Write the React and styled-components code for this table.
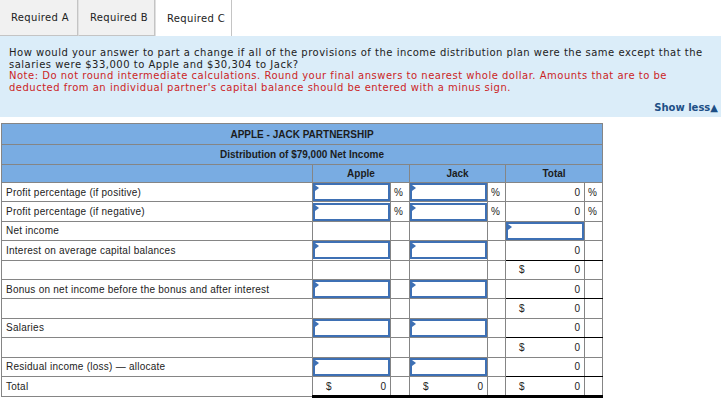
import React from "react";
import styled, { createGlobalStyle } from "styled-components";

const GlobalStyle = createGlobalStyle`
  html, body {
    margin: 0;
    padding: 0;
    background: #ffffff;
  }
  body {
    font-family: "DejaVu Sans", Verdana, sans-serif;
    color: #222222;
  }
`;

const Page = styled.div`
  width: 721px;
  height: 402px;
  overflow: hidden;
`;

const TabBar = styled.div`
  display: flex;
  height: 36px;
`;

const TabButton = styled.div`
  width: ${(p) => p.$w}px;
  box-sizing: border-box;
  display: flex;
  align-items: center;
  padding-left: 11px;
  font-size: 10px;
  letter-spacing: 0.35px;
  color: #222;
  background: ${(p) => (p.$active ? "#ffffff" : "#f1f1f1")};
  border-right: 1px solid #c4c4c4;
  border-left: ${(p) => (p.$first ? "none" : "1px solid #e0e0e0")};
  border-bottom: ${(p) => (p.$active ? "none" : "1px solid #c4c4c4")};
`;

const Filler = styled.div`
  flex: 1;
`;

const Panel = styled.div`
  background: #dbedf9;
  padding: 11px 3px 4px 9px;
  height: 66px;
  display: flex;
  flex-direction: column;
`;

const Question = styled.p`
  margin: 0;
  font-size: 10px;
  letter-spacing: 0.5px;
  line-height: 11.6px;
  color: #222;
`;

const Note = styled(Question)`
  color: #cc1f26;
`;

const ShowLess = styled.div`
  margin-top: auto;
  align-self: flex-end;
  font-size: 10px;
  font-weight: bold;
  color: #1d4f86;
`;

const TableWrap = styled.div`
  padding: 6px 0 0 1px;
`;

const Sheet = styled.table`
  border-collapse: collapse;
  table-layout: fixed;
  width: 601px;
  font-family: "Liberation Sans", Arial, sans-serif;
  font-size: 10px;
  color: #222;
`;

const HeadCell = styled.td`
  background: #79ace2;
  border: 1px solid #858585;
  height: ${(p) => p.$h}px;
  padding: 0;
  text-align: center;
  font-weight: bold;
  font-size: 10px;
  color: #1c1c1c;
`;

const Cell = styled.td`
  border: 1px solid #858585;
  border-bottom: ${(p) =>
    p.$under === "thick"
      ? "3px solid #000"
      : p.$under
      ? "1px solid #000"
      : "1px solid #858585"};
  height: 18.4px;
  padding: ${(p) => (p.$label ? "0 0 0 4px" : "0 4px")};
  text-align: ${(p) => (p.$label ? "left" : "right")};
  letter-spacing: ${(p) => (p.$label ? "0.25px" : "0")};
  white-space: nowrap;
  vertical-align: middle;
`;

const InputCell = styled.td`
  border: 1px solid #858585;
  padding: 0;
  height: 18.4px;
`;

const Field = styled.div`
  position: relative;
  box-sizing: border-box;
  height: 18px;
  border: 2px solid #3e70b4;
  background: #fff;
  &::before {
    content: "";
    position: absolute;
    left: 0;
    top: 0;
    border-top: 3px solid transparent;
    border-bottom: 3px solid transparent;
    border-left: 4px solid #3e70b4;
  }
`;

const Money = styled.div`
  display: flex;
  justify-content: space-between;
  padding-left: 9px;
`;

const Pct = styled.span`
  display: block;
  text-align: left;
  margin-left: -1px;
`;

const tabs = [
  { label: "Required A", w: 78 },
  { label: "Required B", w: 77 },
  { label: "Required C", w: 77, active: true },
];

const Input = () => (
  <InputCell>
    <Field />
  </InputCell>
);

const Amount = ({ dollar, value }) =>
  dollar ? (
    <Money>
      <span>$</span>
      <span>{value}</span>
    </Money>
  ) : (
    value
  );

const PctRow = ({ label }) => (
  <tr>
    <Cell $label>{label}</Cell>
    <Input />
    <Cell>
      <Pct>%</Pct>
    </Cell>
    <Input />
    <Cell>
      <Pct>%</Pct>
    </Cell>
    <Cell>0</Cell>
    <Cell>
      <Pct>%</Pct>
    </Cell>
  </tr>
);

const EntryRow = ({ label }) => (
  <tr>
    <Cell $label>{label}</Cell>
    <Input />
    <Cell />
    <Input />
    <Cell />
    <Cell $under>0</Cell>
    <Cell $under />
  </tr>
);

const SubtotalRow = () => (
  <tr>
    <Cell $label />
    <Cell />
    <Cell />
    <Cell />
    <Cell />
    <Cell>
      <Amount dollar value="0" />
    </Cell>
    <Cell />
  </tr>
);

export default function App() {
  return (
    <Page>
      <GlobalStyle />
      <TabBar>
        {tabs.map((t, i) => (
          <TabButton key={t.label} $w={t.w} $active={t.active} $first={i === 0}>
            {t.label}
          </TabButton>
        ))}
        <Filler />
      </TabBar>
      <Panel>
        <Question>
          How would your answer to part a change if all of the provisions of the
          income distribution plan were the same except that the salaries were
          $33,000 to Apple and $30,304 to Jack?
        </Question>
        <Note>
          Note: Do not round intermediate calculations. Round your final answers
          to nearest whole dollar. Amounts that are to be deducted from an
          individual partner's capital balance should be entered with a minus
          sign.
        </Note>
        <ShowLess>Show less▲</ShowLess>
      </Panel>
      <TableWrap>
        <Sheet>
          <colgroup>
            <col style={{ width: 311 }} />
            <col style={{ width: 78 }} />
            <col style={{ width: 19 }} />
            <col style={{ width: 78 }} />
            <col style={{ width: 18 }} />
            <col style={{ width: 79 }} />
            <col style={{ width: 18 }} />
          </colgroup>
          <tbody>
            <tr>
              <HeadCell colSpan={7} $h={20}>
                APPLE - JACK PARTNERSHIP
              </HeadCell>
            </tr>
            <tr>
              <HeadCell colSpan={7} $h={19}>
                Distribution of $79,000 Net Income
              </HeadCell>
            </tr>
            <tr>
              <HeadCell $h={17} />
              <HeadCell colSpan={2} $h={17}>
                Apple
              </HeadCell>
              <HeadCell colSpan={2} $h={17}>
                Jack
              </HeadCell>
              <HeadCell colSpan={2} $h={17}>
                Total
              </HeadCell>
            </tr>
            <PctRow label="Profit percentage (if positive)" />
            <PctRow label="Profit percentage (if negative)" />
            <tr>
              <Cell $label>Net income</Cell>
              <Cell />
              <Cell />
              <Cell />
              <Cell />
              <Input />
              <Cell />
            </tr>
            <EntryRow label="Interest on average capital balances" />
            <SubtotalRow />
            <EntryRow label="Bonus on net income before the bonus and after interest" />
            <SubtotalRow />
            <EntryRow label="Salaries" />
            <SubtotalRow />
            <EntryRow label="Residual income (loss) — allocate" />
            <tr>
              <Cell $label>Total</Cell>
              <Cell $under="thick">
                <Amount dollar value="0" />
              </Cell>
              <Cell $under="thick" />
              <Cell $under="thick">
                <Amount dollar value="0" />
              </Cell>
              <Cell $under="thick" />
              <Cell $under="thick">
                <Amount dollar value="0" />
              </Cell>
              <Cell $under="thick" />
            </tr>
          </tbody>
        </Sheet>
      </TableWrap>
    </Page>
  );
}
